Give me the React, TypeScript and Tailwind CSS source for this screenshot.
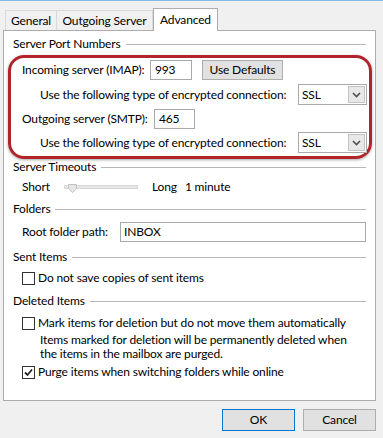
import React from "react";

const font = { fontFamily: 'Lato, "Noto Sans", sans-serif' };

function Heading({ label }: { label: string }) {
  return (
    <div className="flex h-[16px] items-center gap-[5px]">
      <span className="whitespace-nowrap">{label}</span>
      <div className="h-px flex-1 bg-[#b7b7b7]" />
    </div>
  );
}

function Checkbox({ checked }: { checked?: boolean }) {
  return (
    <div className="flex h-[13px] w-[13px] shrink-0 items-center justify-center border border-[#333333] bg-white">
      {checked && (
        <svg width="9" height="9" viewBox="0 0 9 9">
          <path d="M1 4.5 L3.5 7 L8 1.5" stroke="#222" strokeWidth="1.8" fill="none" />
        </svg>
      )}
    </div>
  );
}

function Select({ value }: { value: string }) {
  return (
    <div className="flex h-[21px] w-[69px] shrink-0 items-center justify-between border border-[#a9a9a9] bg-white pl-[3px] pr-[1px]">
      <span>{value}</span>
      <div className="flex h-[17px] w-[17px] items-center justify-center border border-[#c4c4c4] bg-[#e8e8e8]">
        <svg width="9" height="6" viewBox="0 0 9 6">
          <path d="M1 1 L4.5 4.5 L8 1" stroke="#505050" strokeWidth="1.6" fill="none" />
        </svg>
      </div>
    </div>
  );
}

export default function App() {
  return (
    <div
      className="relative h-[438px] w-[383px] overflow-hidden whitespace-nowrap border-t border-[#86b8e8] bg-[#f0f0f0] text-[12px] tracking-[-0.15px] text-black"
      style={font}
    >
      {/* Tabs */}
      <div className="flex h-[29px] items-end pl-[5px]">
        <div className="flex h-[20px] w-[52px] items-center justify-center border border-b-0 border-[#d9d9d9] bg-[#f0f0f0]">
          General
        </div>
        <div className="flex h-[20px] w-[96px] items-center justify-center border border-b-0 border-l-0 border-[#d9d9d9] bg-[#f0f0f0]">
          Outgoing Server
        </div>
        <div className="relative z-10 -mb-px flex h-[23px] w-[65px] items-start justify-center border border-b-0 border-[#adadad] bg-white pt-[2px]">
          Advanced
        </div>
      </div>

      {/* Panel */}
      <div className="ml-[3px] flex h-[371px] w-[373px] flex-col border border-[#adadad] bg-white px-[9px] pt-[5px]">
        <Heading label="Server Port Numbers" />

        <div className="-ml-[5px] -mr-[6px] mt-[3px] flex flex-col rounded-[16px] border-[3px] border-[#b0242a] pb-[3px] pl-[11px] pr-[2px] pt-[2px] shadow-[0_1px_3px_rgba(0,0,0,0.35)]">
          <div className="flex h-[20px] items-center">
            <span className="w-[128px]">Incoming server (IMAP):</span>
            <div className="flex h-[20px] w-[42px] items-center border border-[#a9a9a9] bg-white pl-[4px]">993</div>
            <div className="ml-[10px] flex h-[20px] w-[81px] items-center justify-center border border-[#adadad] bg-[#e1e1e1]">
              Use Defaults
            </div>
          </div>
          <div className="mt-[4px] flex h-[21px] items-center justify-between pl-[18px]">
            <span>Use the following type of encrypted connection:</span>
            <Select value="SSL" />
          </div>
          <div className="mt-[4px] flex h-[20px] items-center">
            <span className="w-[132px]">Outgoing server (SMTP):</span>
            <div className="flex h-[20px] w-[41px] items-center border border-[#a9a9a9] bg-white pl-[4px]">465</div>
          </div>
          <div className="mt-[3px] flex h-[21px] items-center justify-between pl-[18px]">
            <span>Use the following type of encrypted connection:</span>
            <Select value="SSL" />
          </div>
        </div>

        <Heading label="Server Timeouts" />
        <div className="mt-[4px] flex h-[16px] items-center pl-[9px]">
          <span className="w-[42px]">Short</span>
          <div className="relative h-[4px] w-[74px] border border-[#d6d6d6] bg-[#e7e7e7]">
            <svg className="absolute left-[3px] top-[-2px]" width="9" height="9" viewBox="0 0 9 9">
              <path d="M0.5 0.5 H8.5 V4.5 L4.5 8.5 L0.5 4.5 Z" fill="#e6e6e6" stroke="#c2c2c2" />
            </svg>
          </div>
          <span className="ml-[14px]">Long</span>
          <span className="ml-[8px]">1 minute</span>
        </div>

        <div className="mt-[6px]">
          <Heading label="Folders" />
        </div>
        <div className="mt-[5px] flex h-[20px] items-center pl-[9px]">
          <span className="w-[98px]">Root folder path:</span>
          <div className="flex h-[20px] flex-1 items-center border border-[#a9a9a9] bg-white pl-[3px]">INBOX</div>
        </div>

        <div className="mt-[7px]">
          <Heading label="Sent Items" />
        </div>
        <div className="mt-[5px] flex h-[16px] items-center gap-[3px] pl-[9px]">
          <Checkbox />
          <span>Do not save copies of sent items</span>
        </div>

        <div className="mt-[7px]">
          <Heading label="Deleted Items" />
        </div>
        <div className="mt-[6px] flex h-[16px] items-center gap-[3px] pl-[9px]">
          <Checkbox />
          <span>Mark items for deletion but do not move them automatically</span>
        </div>
        <div className="mt-[2px] flex flex-col pl-[27px]">
          <div className="h-[14px] leading-[14px]">Items marked for deletion will be permanently deleted when</div>
          <div className="h-[14px] leading-[14px]">the items in the mailbox are purged.</div>
        </div>
        <div className="mt-[3px] flex h-[16px] items-center gap-[3px] pl-[9px]">
          <Checkbox checked />
          <span>Purge items when switching folders while online</span>
        </div>
      </div>

      {/* Buttons */}
      <div className="mt-[8px] flex justify-end gap-[8px] pr-[7px]">
        <div className="flex h-[22px] w-[73px] items-center justify-center border border-[#0078d7] bg-[#e1e1e1]">OK</div>
        <div className="flex h-[22px] w-[73px] items-center justify-center border border-[#adadad] bg-[#e1e1e1]">Cancel</div>
      </div>
    </div>
  );
}
